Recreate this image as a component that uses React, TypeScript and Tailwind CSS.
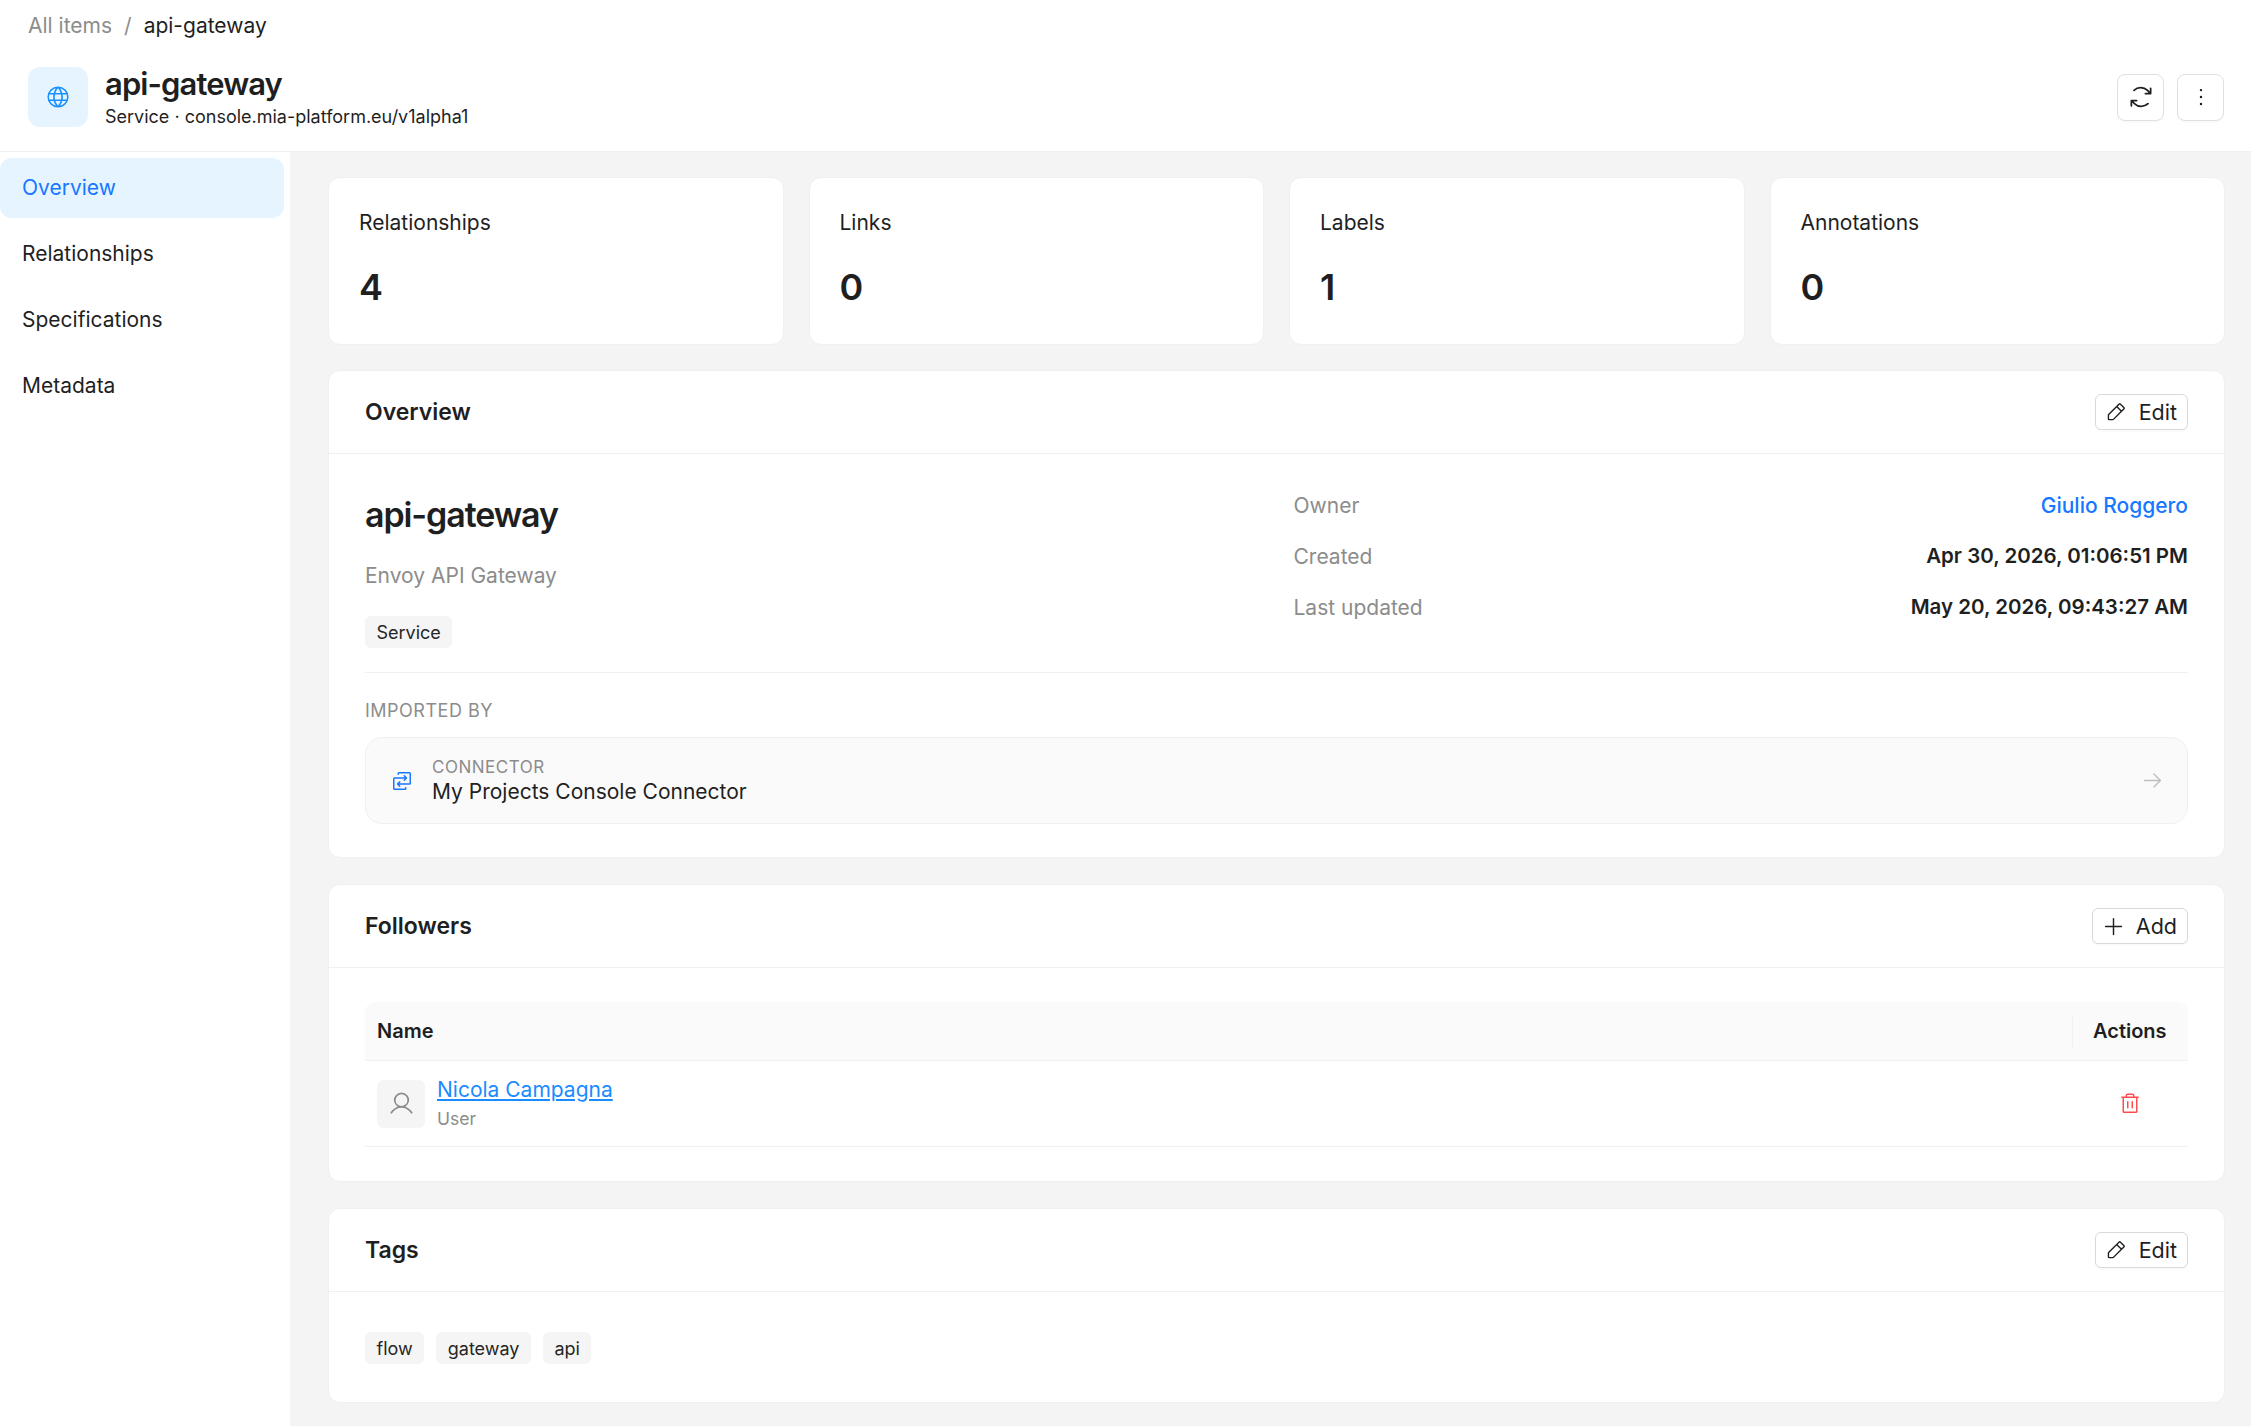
import type { ReactNode } from 'react';
import { PiArrowRight, PiArrowsClockwise, PiDotsThreeVertical, PiGlobe, PiPencilSimple, PiPlus, PiSwap, PiTrash, PiUser } from 'react-icons/pi';

const STATS = [
  { label: 'Relationships', value: 4 },
  { label: 'Links', value: 0 },
  { label: 'Labels', value: 1 },
  { label: 'Annotations', value: 0 },
];

const NAV = ['Overview', 'Relationships', 'Specifications', 'Metadata'];

function Tag({ children }: { children: string }) {
  return <span className="flex h-8 items-center rounded-[6px] bg-[#f5f5f5] px-[11.5px] text-[18px] text-[#262626]">{children}</span>;
}

function ActionButton({ icon, label, width }: { icon: ReactNode; label: string; width: string }) {
  return (
    <button className={`flex h-9 items-center justify-between rounded-[6px] border border-[#d9d9d9] bg-white pr-[10px] pl-[9px] text-[21.5px] text-[#1f1f1f] shadow-[0_2px_0_rgba(0,0,0,0.02)] ${width}`}>
      {icon}
      <span>{label}</span>
    </button>
  );
}

function Section({ title, action, children }: { title: string; action: ReactNode; children: ReactNode }) {
  return (
    <section className="rounded-[12px] border border-[#f0f0f0] bg-white">
      <div className="flex h-[83px] items-center justify-between border-b border-[#f0f0f0] pr-[36px] pl-[36px]">
        <h2 className="text-[23px] font-semibold text-[#1f1f1f]">{title}</h2>
        {action}
      </div>
      {children}
    </section>
  );
}

function DetailRow({ label, children }: { label: string; children: ReactNode }) {
  return (
    <div className="flex h-[51px] items-center justify-between text-[21px]">
      <span className="text-[#8c8c8c]">{label}</span>
      {children}
    </div>
  );
}

export default function App() {
  return (
    <div className="flex h-[1426px] flex-col overflow-hidden bg-[#f4f4f4] font-['Inter',sans-serif]">
      <header className="h-[152px] shrink-0 border-b border-[#f0f0f0] bg-white pr-[27px] pl-[28px]">
        <div className="flex h-[52px] items-center gap-[12px] text-[21px]">
          <span className="text-[#8c8c8c]">All items</span>
          <span className="text-[#8c8c8c]">/</span>
          <span className="text-[#1f1f1f]">api-gateway</span>
        </div>
        <div className="mt-[15px] flex h-[60px] items-center">
          <div className="flex h-[60px] w-[60px] items-center justify-center rounded-[12px] bg-[#e6f4ff]">
            <PiGlobe className="h-[26px] w-[26px] text-[#1890ff]" />
          </div>
          <div className="ml-[17px] pt-[2px]">
            <div className="text-[31px] leading-[34px] font-semibold tracking-[-0.9px] text-[#1f1f1f]">api-gateway</div>
            <div className="mt-[3px] text-[18px] leading-[26px] text-[#1f1f1f]">Service · console.mia-platform.eu/v1alpha1</div>
          </div>
          <div className="ml-auto flex gap-[13px]">
            <button className="flex h-[47px] w-[47px] items-center justify-center rounded-[8px] border border-[#e0e0e0] bg-white shadow-[0_2px_0_rgba(0,0,0,0.02)]">
              <PiArrowsClockwise className="h-[28px] w-[28px] text-[#1f1f1f]" />
            </button>
            <button className="flex h-[47px] w-[47px] items-center justify-center rounded-[8px] border border-[#e0e0e0] bg-white shadow-[0_2px_0_rgba(0,0,0,0.02)]">
              <PiDotsThreeVertical className="h-[26px] w-[26px] text-[#1f1f1f]" />
            </button>
          </div>
        </div>
      </header>

      <div className="flex min-h-0 flex-1">
        <nav className="flex w-[290px] shrink-0 flex-col gap-[6px] bg-white pt-[6px] pr-[6px]">
          {NAV.map((item, i) => (
            <div key={item} className={`flex h-[60px] items-center rounded-[12px] pl-[22px] text-[21px] ${i === 0 ? 'bg-[#e6f4ff] text-[#1677ff]' : 'text-[#1f1f1f]'}`}>
              {item}
            </div>
          ))}
        </nav>

        <main className="flex min-w-0 flex-1 flex-col gap-[26px] pt-[25px] pr-[26px] pl-[38px]">
          <div className="-mb-px grid grid-cols-4 gap-[25px]">
            {STATS.map(stat => (
              <div key={stat.label} className="h-[168px] rounded-[12px] border border-[#f0f0f0] bg-white px-[30px] pt-[30px]">
                <div className="text-[21px] leading-[30px] text-[#1f1f1f]">{stat.label}</div>
                <div className="mt-[24px] text-[36px] leading-[50px] font-semibold text-[#1f1f1f]">{stat.value}</div>
              </div>
            ))}
          </div>

          <Section title="Overview" action={<ActionButton icon={<PiPencilSimple className="h-[22px] w-[22px]" />} label="Edit" width="w-[93px]" />}>
            <div className="pt-[26px] pr-[36px] pl-[36px]">
              <div className="grid grid-cols-2 gap-[34px] border-b border-[#f0f0f0] pb-[24px]">
                <div className="pt-[7px]">
                  <h3 className="text-[34px] leading-[56px] font-semibold tracking-[-1.1px] text-[#1f1f1f]">api-gateway</h3>
                  <p className="mt-[18px] text-[21px] leading-[30px] text-[#8c8c8c]">Envoy API Gateway</p>
                  <div className="mt-[25px] flex"><Tag>Service</Tag></div>
                </div>
                <div>
                  <DetailRow label="Owner"><span className="font-medium text-[#1677ff]">Giulio Roggero</span></DetailRow>
                  <DetailRow label="Created"><span className="text-[20.5px] font-semibold text-[#1f1f1f]">Apr 30, 2026, 01:06:51 PM</span></DetailRow>
                  <DetailRow label="Last updated"><span className="text-[20.5px] font-semibold text-[#1f1f1f]">May 20, 2026, 09:43:27 AM</span></DetailRow>
                </div>
              </div>
              <div className="mt-[25px] text-[18px] leading-[26px] tracking-[0.5px] text-[#8c8c8c]">IMPORTED BY</div>
              <div className="mt-[13px] mb-[33px] flex h-[87px] items-center rounded-[17px] border border-[#f0f0f0] bg-[#fafafa] pr-[23px] pl-[24px]">
                <PiSwap className="h-[24px] w-[24px] text-[#1677ff]" />
                <div className="ml-[18px]">
                  <div className="text-[17px] leading-[22px] tracking-[0.5px] text-[#8c8c8c]">CONNECTOR</div>
                  <div className="text-[21px] leading-[28px] text-[#1f1f1f]">My Projects Console Connector</div>
                </div>
                <PiArrowRight className="ml-auto h-[23px] w-[23px] text-[#bfbfbf]" />
              </div>
            </div>
          </Section>

          <Section title="Followers" action={<ActionButton icon={<PiPlus className="h-[23px] w-[23px]" />} label="Add" width="w-[96px]" />}>
            <div className="pt-[34px] pr-[36px] pb-[34px] pl-[36px]">
              <div className="flex h-[59px] items-center rounded-t-[10px] border-b border-[#f0f0f0] bg-[#fafafa] pl-[12px] text-[20px] font-semibold text-[#1f1f1f]">
                <span className="flex-1">Name</span>
                <span className="flex h-[33px] w-[116px] items-center border-l border-[#f0f0f0] pl-[20px]">Actions</span>
              </div>
              <div className="flex h-[86px] items-center border-b border-[#f0f0f0] pl-[12px]">
                <div className="flex h-[48px] w-[48px] items-center justify-center rounded-[6px] bg-[#f5f5f5]">
                  <PiUser className="h-[27px] w-[27px] text-[#8c8c8c]" />
                </div>
                <div className="ml-[12px] flex-1">
                  <a className="block text-[21px] leading-[29px] text-[#1a8cff] underline">Nicola Campagna</a>
                  <span className="block text-[17.5px] leading-[29px] text-[#8c8c8c]">User</span>
                </div>
                <div className="flex w-[116px] justify-center">
                  <PiTrash className="h-[24px] w-[24px] text-[#ff4d4f]" />
                </div>
              </div>
            </div>
          </Section>

          <Section title="Tags" action={<ActionButton icon={<PiPencilSimple className="h-[22px] w-[22px]" />} label="Edit" width="w-[93px]" />}>
            <div className="flex gap-[12px] pt-[40px] pr-[36px] pb-[38px] pl-[36px]">
              <Tag>flow</Tag>
              <Tag>gateway</Tag>
              <Tag>api</Tag>
            </div>
          </Section>
        </main>
      </div>
    </div>
  );
}
